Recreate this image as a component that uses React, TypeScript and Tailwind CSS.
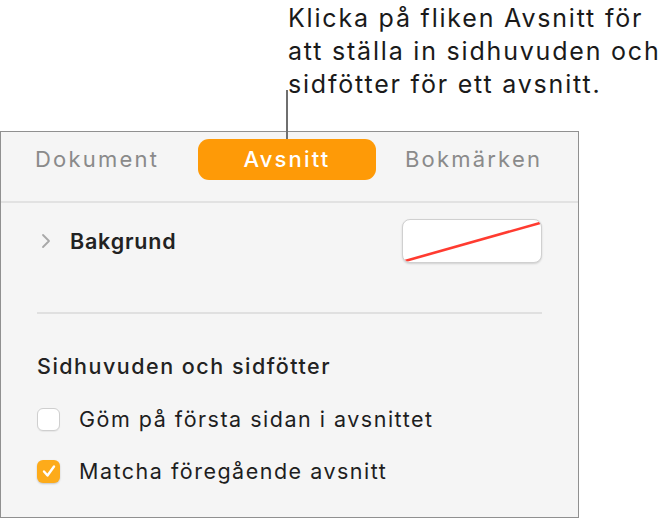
import React from "react";

const Checkbox = ({ checked }: { checked?: boolean }) =>
  checked ? (
    <div className="flex h-[23px] w-[23px] items-center justify-center rounded-[6px] bg-[#fdab1a] shadow-[0_1px_2px_rgba(0,0,0,0.2)]">
      <svg width="16" height="16" viewBox="0 0 16 16" fill="none">
        <path d="M3 8.5 L6.5 12.5 L13 3.5" stroke="white" strokeWidth="2.4" strokeLinecap="round" strokeLinejoin="round" />
      </svg>
    </div>
  ) : (
    <div className="h-[23px] w-[23px] rounded-[6px] border border-[#cfcfcf] bg-white shadow-[0_1px_1px_rgba(0,0,0,0.06)]" />
  );

export default function App() {
  return (
    <div className="relative h-[519px] w-[660px] overflow-hidden bg-white font-['Inter',sans-serif] text-[#1e1e1e]">
      <div className="whitespace-nowrap pl-[288px] pt-[2px] text-[25px] leading-[33px] tracking-[1.8px] text-[#1a1a1a]">
        <p>Klicka på fliken Avsnitt för</p>
        <p>att ställa in sidhuvuden och</p>
        <p>sidfötter för ett avsnitt.</p>
      </div>
      <div className="absolute left-[286px] top-[90px] h-[49px] w-[2px] bg-[#6f6f6f]" />

      <div className="mt-[30px] h-[387px] w-[579px] border border-[#909090] bg-[#f5f5f5]">
        <div className="flex h-[71px] items-start border-b-2 border-[#e2e2e2] pt-[7px] text-[22px] leading-[41px] tracking-[2.2px]">
          <div className="w-[197px] pl-[34px] text-[#8a8a8a]">Dokument</div>
          <div className="flex h-[41px] w-[178px] items-center justify-center rounded-[11px] bg-[#fe9a07] font-medium text-white">
            Avsnitt
          </div>
          <div className="pl-[29px] text-[#8a8a8a]">Bokmärken</div>
        </div>

        <div className="px-[36px]">
          <div className="flex h-[76px] items-center">
            <svg width="10" height="16" viewBox="0 0 10 16" className="ml-[4px]" fill="none">
              <path d="M2 2 L8 8 L2 14" stroke="#a8a8a8" strokeWidth="1.8" strokeLinecap="round" strokeLinejoin="round" />
            </svg>
            <span className="ml-[19px] text-[21.5px] font-semibold tracking-[0.8px] text-[#222]">Bakgrund</span>
            <div className="ml-auto h-[44px] w-[140px] overflow-hidden rounded-[8px] border border-[#d0d0d0] bg-white shadow-[0_1px_2px_rgba(0,0,0,0.15)]">
              <svg width="140" height="44" viewBox="0 0 140 44">
                <line x1="2" y1="41" x2="137" y2="3" stroke="#ff3b30" strokeWidth="2.6" />
              </svg>
            </div>
          </div>

          <div className="mt-[33px] h-[2px] bg-[#e0e0e0]" />

          <div className="mt-[38px] text-[21.5px] font-medium leading-[28px] tracking-[1.5px] text-[#222]">
            Sidhuvuden och sidfötter
          </div>

          <div className="mt-[27px] flex h-[24px] items-center gap-[19px] text-[21.5px] tracking-[1.5px]">
            <Checkbox />
            <span>Göm på första sidan i avsnittet</span>
          </div>
          <div className="mt-[28px] flex h-[24px] items-center gap-[19px] text-[21.5px] tracking-[1.5px]">
            <Checkbox checked />
            <span>Matcha föregående avsnitt</span>
          </div>
        </div>
      </div>
    </div>
  );
}
